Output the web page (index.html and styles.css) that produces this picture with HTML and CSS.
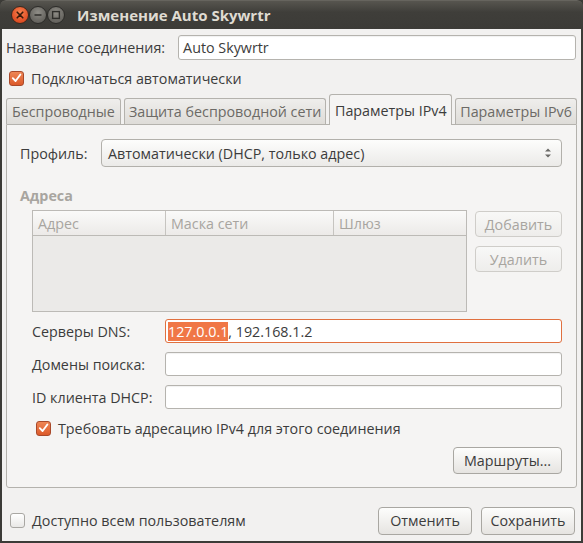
FILE: index.html
```html
<!DOCTYPE html>
<html lang="ru">
<head>
<meta charset="utf-8">
<title>Изменение Auto Skywrtr</title>
<link rel="stylesheet" href="styles.css">
</head>
<body>
<div class="window">
  <div class="titlebar">
    <div class="wm-buttons">
      <span class="wm-btn close">
        <svg width="18" height="18" viewBox="0 0 18 18"><path d="M6.2 6.2 L11.8 11.8 M11.8 6.2 L6.2 11.8" stroke="#3a1a0a" stroke-width="1.6" stroke-linecap="round"/></svg>
      </span>
      <span class="wm-btn gray">
        <svg width="18" height="18" viewBox="0 0 18 18"><path d="M5.5 9 H12.5" stroke="#2f2e2b" stroke-width="1.6"/></svg>
      </span>
      <span class="wm-btn gray">
        <svg width="18" height="18" viewBox="0 0 18 18"><rect x="5.6" y="5.6" width="6.8" height="6.8" fill="none" stroke="#2f2e2b" stroke-width="1.4"/></svg>
      </span>
    </div>
    <div class="title">Изменение Auto Skywrtr</div>
  </div>

  <div class="content">
    <div class="row name-row">
      <span class="label">Название соединения:</span>
      <div class="entry grow">Auto Skywrtr</div>
    </div>

    <div class="row check-row">
      <span class="checkbox checked">
        <svg width="14" height="14" viewBox="0 0 14 14"><path d="M3 7.2 L6 10.2 L11.2 3.2" fill="none" stroke="#fff" stroke-width="2" stroke-linecap="round" stroke-linejoin="round"/></svg>
      </span>
      <span class="label">Подключаться автоматически</span>
    </div>

    <div class="tabs">
      <div class="tab t1">Беспроводные</div>
      <div class="tab t2">Защита беспроводной сети</div>
      <div class="tab active t3">Параметры IPv4</div>
      <div class="tab t4">Параметры IPv6</div>
    </div>

    <div class="panel">
      <div class="row profile-row">
        <span class="label profile-label">Профиль:</span>
        <div class="combo grow">
          <span>Автоматически (DHCP, только адрес)</span>
          <svg class="arrows" width="8" height="14" viewBox="0 0 8 14"><path d="M1 5.5 L4 2.5 L7 5.5 Z M1 8.5 L4 11.5 L7 8.5 Z" fill="#6a6966"/></svg>
        </div>
      </div>

      <div class="section-title">Адреса</div>

      <div class="addr">
        <div class="table">
          <div class="thead">
            <div class="th c1">Адрес</div>
            <div class="th c2">Маска сети</div>
            <div class="th c3">Шлюз</div>
          </div>
          <div class="tbody"></div>
        </div>
        <div class="side-buttons">
          <div class="button disabled side">Добавить</div>
          <div class="button disabled side">Удалить</div>
        </div>
      </div>

      <div class="form">
        <span class="label">Серверы DNS:</span>
        <div class="entry focused"><span class="sel">127.0.0.1</span>, 192.168.1.2</div>
        <span class="label">Домены поиска:</span>
        <div class="entry"></div>
        <span class="label">ID клиента DHCP:</span>
        <div class="entry"></div>
      </div>

      <div class="row check-row require">
        <span class="checkbox checked">
          <svg width="14" height="14" viewBox="0 0 14 14"><path d="M3 7.2 L6 10.2 L11.2 3.2" fill="none" stroke="#fff" stroke-width="2" stroke-linecap="round" stroke-linejoin="round"/></svg>
        </span>
        <span class="label">Требовать адресацию IPv4 для этого соединения</span>
      </div>

      <div class="routes-row">
        <div class="button routes">Маршруты...</div>
      </div>
    </div>

    <div class="bottom">
      <span class="checkbox"></span>
      <span class="label">Доступно всем пользователям</span>
      <span class="spacer"></span>
      <div class="button dlg">Отменить</div>
      <div class="button dlg">Сохранить</div>
    </div>
  </div>
</div>
</body>
</html>
```

FILE: styles.css
```css
* { box-sizing: border-box; }

html, body {
  margin: 0;
  padding: 0;
  background: #3c3b37;
}

body {
  width: 583px;
  height: 543px;
  overflow: hidden;
  font-family: "Open Sans", "Noto Sans", "DejaVu Sans", sans-serif;
  font-size: 14.3px;
  color: #3c3c3c;
}

.window {
  width: 583px;
  height: 543px;
  display: flex;
  flex-direction: column;
  background: #3c3b37;
  border-radius: 6px 6px 0 0;
  overflow: hidden;
}

.titlebar {
  height: 29px;
  flex: none;
  display: flex;
  align-items: center;
  background: linear-gradient(#57554f, #3f3e3a 40%, #3c3b37);
  border-top: 1px solid #66645e;
  border-radius: 6px 6px 0 0;
}

.wm-buttons {
  display: flex;
  margin-left: 11px;
}

.wm-btn {
  width: 18px;
  height: 18px;
  border-radius: 50%;
  display: flex;
  align-items: center;
  justify-content: center;
  border: 1px solid #2d2c29;
}

.wm-btn svg { display: block; margin: -1px; }

.wm-btn.close {
  background: radial-gradient(circle at 50% 35%, #f7834f, #e4542a 60%, #c9411a);
  border-color: #3a2a20;
}

.wm-btn.gray {
  background: radial-gradient(circle at 50% 35%, #8f8d87, #6b6964 60%, #5a5853);
}

.title {
  margin-left: 12px;
  font-weight: bold;
  font-size: 15px;
  color: #dfdbd2;
}

.content {
  flex: 1;
  display: flex;
  flex-direction: column;
  background: #f2f1f0;
  margin: 0 2px 2px 2px;
  padding: 6px 4px 0 4px;
}

.row {
  display: flex;
  align-items: center;
}

.grow { flex: 1; }

.label { white-space: nowrap; }

.name-row {
  height: 25px;
  gap: 13px;
}

.entry {
  height: 25px;
  background: #fff;
  border: 1px solid #b5b3ae;
  border-radius: 3px;
  padding: 0 4px;
  display: flex;
  align-items: center;
  box-shadow: inset 0 1px 1px rgba(0,0,0,0.06);
  white-space: nowrap;
}

.name-row .entry { margin-right: 1px; }

.check-row {
  height: 20px;
  margin-top: 8px;
  gap: 7px;
  padding-left: 3px;
}

.checkbox {
  width: 15px;
  height: 15px;
  flex: none;
  border-radius: 3px;
  border: 1px solid #a9a7a3;
  background: linear-gradient(#ffffff, #e9e8e6);
  display: flex;
  align-items: center;
  justify-content: center;
}

.checkbox svg { display: block; }

.checkbox.checked {
  background: linear-gradient(#ee8655, #dc5a2a);
  border-color: #a9492a;
}

.tabs {
  display: flex;
  align-items: flex-end;
  height: 30px;
  margin-top: 6px;
  gap: 3px;
  position: relative;
  z-index: 1;
}

.tab {
  height: 26px;
  padding: 0 4px;
  display: flex;
  align-items: center;
  justify-content: center;
  border: 1px solid #b4b2ad;
  border-bottom: none;
  border-radius: 3px 3px 0 0;
  background: linear-gradient(#efeeec, #dedcd8);
  color: #6c6a66;
  white-space: nowrap;
}

.t1 { width: 115px; }
.t2 { width: 203px; }
.t3 { width: 123px; }
.t4 { width: 122px; }

.tab.active {
  background: #f5f4f3;
  color: #3c3c3c;
  margin-bottom: -1px;
  height: 31px;
}

.panel {
  height: 364px;
  flex: none;
  border: 1px solid #b4b2ad;
  border-radius: 0 0 3px 3px;
  background: #f5f4f3;
  padding: 14px 14px 0 13px;
  display: flex;
  flex-direction: column;
}

.profile-row {
  height: 28px;
}

.profile-label { width: 81px; }

.combo {
  height: 28px;
  border: 1px solid #b2b0ab;
  border-radius: 4px;
  background: linear-gradient(#fdfdfc, #ebeae8);
  display: flex;
  align-items: center;
  padding: 0 6px;
  justify-content: space-between;
  white-space: nowrap;
}

.arrows { margin-right: 3px; }

.section-title {
  margin-top: 19px;
  font-weight: bold;
  color: #a8a5a0;
  height: 19px;
  line-height: 19px;
}

.addr {
  display: flex;
  margin-top: 5px;
  margin-left: 12px;
  gap: 8px;
}

.table {
  width: 435px;
  flex: none;
  height: 102px;
  border: 1px solid #bcbab6;
  display: flex;
  flex-direction: column;
  background: #ebeae8;
}

.thead {
  display: flex;
  height: 25px;
  border-bottom: 1px solid #bcbab6;
  background: linear-gradient(#fafaf9, #eceae8);
}

.th {
  padding-left: 5px;
  display: flex;
  align-items: center;
  color: #a8a5a0;
}

.c1 { width: 133px; border-right: 1px solid #c6c4c0; }
.c2 { width: 168px; border-right: 1px solid #c6c4c0; }
.c3 { flex: 1; }

.side-buttons {
  display: flex;
  flex-direction: column;
  gap: 9px;
  padding-top: 1px;
}

.button {
  height: 27px;
  border: 1px solid #a9a7a2;
  border-radius: 4px;
  background: linear-gradient(#fdfdfc, #e6e4e1);
  display: flex;
  align-items: center;
  justify-content: center;
  white-space: nowrap;
  color: #3c3c3c;
}

.button.side {
  width: 87px;
  height: 26px;
}

.button.disabled {
  color: #a8a5a0;
  border-color: #cfcdc9;
  background: linear-gradient(#f8f8f7, #eeedeb);
}

.form {
  margin-top: 7px;
  margin-left: 12px;
  display: grid;
  grid-template-columns: 133px 1fr;
  row-gap: 9px;
  align-items: center;
}

.form .entry { height: 24px; padding: 0 2px; }

.entry.focused {
  border-color: #e0703f;
  box-shadow: none;
}

.sel {
  background: #f07746;
  color: #fff;
}

.require {
  margin-top: 9px;
  padding-left: 16px;
}

.routes-row {
  display: flex;
  justify-content: flex-end;
  margin-top: 9px;
}

.button.routes {
  width: 109px;
}

.bottom {
  flex: 1;
  display: flex;
  align-items: center;
  gap: 7px;
  padding-left: 4px;
  padding-right: 2px;
  padding-top: 12px;
}

.spacer { flex: 1; }

.button.dlg {
  width: 94px;
  height: 28px;
  margin-left: 2px;
}
```
